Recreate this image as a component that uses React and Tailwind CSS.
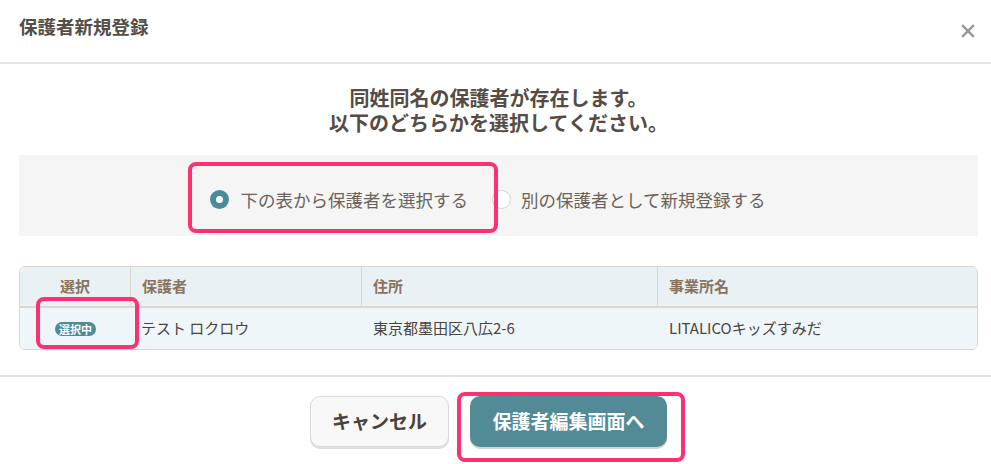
import React from 'react'

const FONT = '"Noto Sans CJK JP", "Noto Sans", sans-serif'

function Radio({ checked }) {
  return checked ? (
    <span className="flex h-[19px] w-[19px] shrink-0 items-center justify-center rounded-full bg-[#4b8a98]">
      <span className="h-[7px] w-[7px] rounded-full bg-white" />
    </span>
  ) : (
    <span className="h-[19px] w-[19px] shrink-0 rounded-full border border-[#d6d3cf] bg-white" />
  )
}

export default function App() {
  return (
    <div
      className="relative h-[464px] w-[991px] overflow-hidden bg-white text-[#554d46]"
      style={{ fontFamily: FONT }}
    >
      {/* header */}
      <div className="flex h-[64px] items-start justify-between border-b-2 border-[#e6e3df] pl-[19px] pr-[16px]">
        <h1 className="pt-[13px] text-[18.5px] font-bold leading-[26px] text-[#554d47]">保護者新規登録</h1>
        <button className="mt-[24px] flex h-[14px] w-[15px] items-center justify-center">
          <svg width="14" height="14" viewBox="0 0 14 14" stroke="#9a9691" strokeWidth="2.4" strokeLinecap="square">
            <line x1="2" y1="2" x2="12" y2="12" />
            <line x1="12" y1="2" x2="2" y2="12" />
          </svg>
        </button>
      </div>

      {/* body */}
      <div className="pl-[19px] pr-[13px] pt-[21px]">
        <p className="text-center text-[20px] font-bold leading-[25px] text-[#554c45]">
          同姓同名の保護者が存在します。
          <br />
          以下のどちらかを選択してください。
        </p>

        <div className="mt-[20px] flex h-[81px] items-center justify-center bg-[#f5f5f5] pr-[22px] pt-[8px]">
          <label className="flex items-center gap-[12px]">
            <Radio checked />
            <span className="text-[17.5px] leading-[24px] text-[#6b635b]">下の表から保護者を選択する</span>
          </label>
          <label className="ml-[24px] flex items-center gap-[10px]">
            <Radio />
            <span className="text-[17.5px] leading-[24px] text-[#6b635b]">別の保護者として新規登録する</span>
          </label>
        </div>

        {/* table */}
        <div className="mt-[30px] overflow-hidden rounded-[6px] border border-[#dbd6d1] text-[15px]">
          <div className="grid h-[41px] grid-cols-[111px_231px_296px_1fr] border-b-2 border-[#dbd6d1] bg-[#e9f1f4] font-bold text-[#8a735e]">
            <div className="flex items-center justify-center border-r border-[#dbd6d1]">選択</div>
            <div className="flex items-center border-r border-[#dbd6d1] pl-[11px]">保護者</div>
            <div className="flex items-center border-r border-[#dbd6d1] pl-[11px]">住所</div>
            <div className="flex items-center pl-[11px]">事業所名</div>
          </div>
          <div className="grid h-[41px] grid-cols-[111px_231px_296px_1fr] bg-[#eff6f9] text-[#4a433d]">
            <div className="flex items-center justify-center">
              <span className="rounded-full bg-[#4e8a97] px-[4px] text-[11px] font-bold leading-[14px] text-white">選択中</span>
            </div>
            <div className="flex items-center pl-[10px]">テスト ロクロウ</div>
            <div className="flex items-center pl-[11px]">東京都墨田区八広2-6</div>
            <div className="flex items-center pl-[11px]">LITALICOキッズすみだ</div>
          </div>
        </div>
      </div>

      {/* footer */}
      <div className="mt-[25px] flex justify-center gap-[21px] border-t-2 border-[#e6e3df] pr-[14px] pt-[19px]">
        <button className="h-[51px] w-[139px] rounded-[10px] border border-[#dcd9d5] bg-[#f8f8f8] text-[19px] font-bold text-[#4a423c] shadow-[0_2px_0_#e2dfdb]">
          キャンセル
        </button>
        <button className="h-[51px] w-[197px] rounded-[10px] bg-[#528a96] text-[19px] font-bold text-white shadow-[0_2px_0_#d4d4d4]">
          保護者編集画面へ
        </button>
      </div>

      {/* annotation highlights */}
      <div className="pointer-events-none absolute left-[188px] top-[162px] h-[71px] w-[310px] rounded-[8px] border-[4px] border-[#fe3170]" />
      <div className="pointer-events-none absolute left-[36px] top-[297px] h-[52px] w-[103px] rounded-[8px] border-[4px] border-[#fe3170]" />
      <div className="pointer-events-none absolute left-[457px] top-[392px] h-[70px] w-[228px] rounded-[8px] border-[4px] border-[#fe3170]" />
    </div>
  )
}
